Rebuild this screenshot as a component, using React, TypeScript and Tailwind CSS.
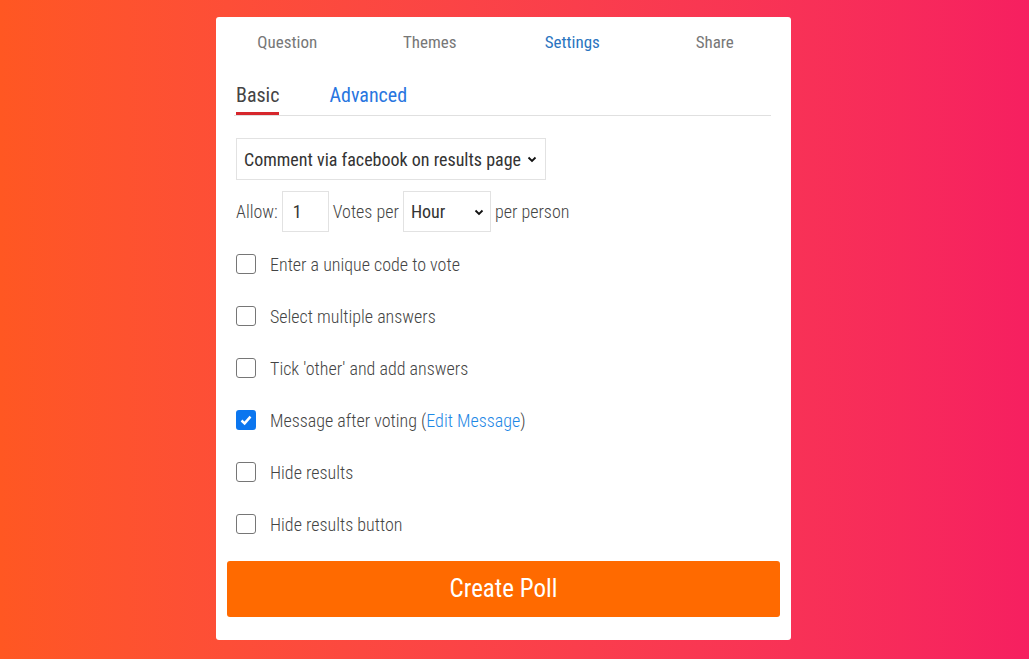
import { useState } from 'react';

const tabs = ['Question', 'Themes', 'Settings', 'Share'];

const options = [
  { label: 'Enter a unique code to vote', checked: false },
  { label: 'Select multiple answers', checked: false },
  { label: "Tick 'other' and add answers", checked: false },
  { label: 'Message after voting', checked: true, edit: true },
  { label: 'Hide results', checked: false },
  { label: 'Hide results button', checked: false },
];

function Chevron() {
  return (
    <svg width="10" height="10" viewBox="0 0 10 10" className="shrink-0">
      <path d="M1.5 3.5 L5 7 L8.5 3.5" fill="none" stroke="#111" strokeWidth="1.8" />
    </svg>
  );
}

function Box({ checked }: { checked: boolean }) {
  if (checked) {
    return (
      <span className="flex h-[20px] w-[20px] shrink-0 items-center justify-center rounded-[3px] bg-[#0b76ef]">
        <svg width="14" height="14" viewBox="0 0 14 14">
          <path d="M2.5 7.5 L5.6 10.4 L11.5 3.6" fill="none" stroke="#fff" strokeWidth="2.4" />
        </svg>
      </span>
    );
  }
  return <span className="h-[20px] w-[20px] shrink-0 rounded-[3px] border border-[#767676] bg-white" />;
}

export default function App() {
  const [sub] = useState('Basic');
  return (
    <div
      className="flex min-h-[659px] w-full bg-gradient-to-r from-[#ff5722] to-[#f61f60] pl-[216px] pt-[17px]"
      style={{ fontFamily: '"Roboto Condensed", Roboto, "Liberation Sans", sans-serif' }}
    >
      <div className="flex h-[623px] w-[575px] flex-col rounded-[3px] bg-white">
        <div className="grid grid-cols-4 pr-[5px] pt-[15px] text-[17px] leading-[20px] text-[#777]">
          {tabs.map((t) => (
            <div key={t} className={`text-center ${t === 'Settings' ? 'text-[#2a74c0]' : ''}`}>
              {t}
            </div>
          ))}
        </div>

        <div className="ml-[18px] mr-[20px] mt-[31px] flex border-b border-[#e0e0e0] text-[20px] leading-[24px]">
          <div className={`ml-[2px] border-b-[3px] pb-[5px] ${sub === 'Basic' ? 'border-[#d6262c] text-[#444]' : ''}`}>
            Basic
          </div>
          <div className="ml-[50px] pb-[5px] text-[#2876e0]">Advanced</div>
        </div>

        <div className="px-[20px] pt-[22px] text-[#333]">
          <div className="flex h-[42px] w-[310px] items-center gap-[6px] border border-[#e2e2e2] pl-[7px] pr-[8px] text-[18px] text-[#333]">
            <span className="flex-1 whitespace-nowrap">Comment via facebook on results page</span>
            <Chevron />
          </div>

          <div className="mt-[11px] flex items-center text-[18px] font-light text-[#444]">
            <span>Allow:</span>
            <span className="ml-[4px] flex h-[41px] w-[47px] items-center border border-[#e2e2e2] pl-[10px] font-normal text-[#333]">
              1
            </span>
            <span className="ml-[4px]">Votes per</span>
            <span className="ml-[4px] flex h-[41px] w-[88px] items-center justify-between border border-[#e2e2e2] pl-[7px] pr-[6px] font-normal text-[#333]">
              Hour
              <Chevron />
            </span>
            <span className="ml-[4px]">per person</span>
          </div>

          <div className="mt-[22px] flex flex-col gap-[32px]">
            {options.map((o) => (
              <div key={o.label} className="flex h-[20px] items-center gap-[14px] text-[18px] font-light text-[#444]">
                <Box checked={o.checked} />
                <span className="whitespace-nowrap">
                  {o.label}
                  {o.edit && (
                    <>
                      {' ('}
                      <span className="text-[#1e88e5]">Edit Message</span>
                      {')'}
                    </>
                  )}
                </span>
              </div>
            ))}
          </div>
        </div>

        <div className="mx-[11px] mt-[27px] flex h-[56px] items-center justify-center rounded-[3px] bg-[#ff6a00] text-[25px] text-white">
          Create Poll
        </div>
      </div>
    </div>
  );
}
